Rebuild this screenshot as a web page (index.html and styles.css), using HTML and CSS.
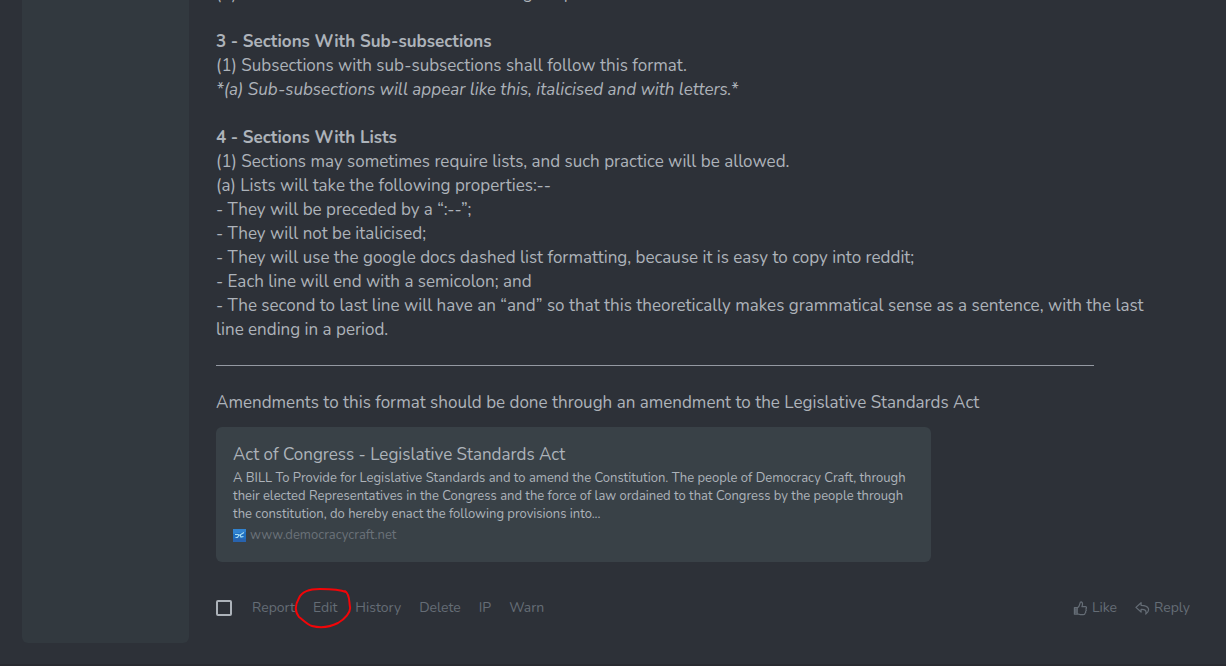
FILE: index.html
```html
<!DOCTYPE html>
<html lang="en">
<head>
<meta charset="utf-8">
<title>Legislative Format</title>
<link rel="stylesheet" href="styles.css">
</head>
<body>
<article class="post">
  <aside class="post-user"></aside>
  <div class="post-main">
    <div class="post-body">
      <p>(1) Subsections will be formatted in using simple</p>
      <section>
        <h2>3 - Sections With Sub-subsections</h2>
        <p>(1) Subsections with sub-subsections shall follow this format.</p>
        <p><em>*(a) Sub-subsections will appear like this, italicised and with letters.*</em></p>
      </section>
      <section>
        <h2>4 - Sections With Lists</h2>
        <p>(1) Sections may sometimes require lists, and such practice will be allowed.</p>
        <p>(a) Lists will take the following properties:--</p>
        <p>- They will be preceded by a “:--”;</p>
        <p>- They will not be italicised;</p>
        <p>- They will use the google docs dashed list formatting, because it is easy to copy into reddit;</p>
        <p>- Each line will end with a semicolon; and</p>
        <p>- The second to last line will have an “and” so that this theoretically makes grammatical sense as a sentence, with the last line ending in a period.</p>
      </section>
      <hr class="rule">
      <p>Amendments to this format should be done through an amendment to the Legislative Standards Act</p>
    </div>
    <div class="unfurl">
      <h3><a href="#">Act of Congress - Legislative Standards Act</a></h3>
      <p class="unfurl-text">A BILL To Provide for Legislative Standards and to amend the Constitution. The people of Democracy Craft, through their elected Representatives in the Congress and the force of law ordained to that Congress by the people through the constitution, do hereby enact the following provisions into...</p>
      <div class="unfurl-site">
        <svg class="favicon" viewBox="0 0 13 13" aria-hidden="true">
          <rect width="13" height="13" fill="#1f6fc0"/>
          <path d="M0 0h13v3L0 5z" fill="#3183d0"/>
          <path d="M0 10l5-1 8 1v3H0z" fill="#2863ae"/>
          <path d="M2 5.500h3l1 .5-1.500 2.500H2.500M11 3.500L7 6l1 2 2.500-.5M5 6l3 0" fill="none" stroke="#a5dcf3" stroke-width="1.200"/>
        </svg>
        <span>www.democracycraft.net</span>
      </div>
    </div>
    <footer class="actions">
      <div class="group">
        <input class="select-post" type="checkbox" aria-label="Select post">
        <a href="#">Report</a>
        <a class="edit" href="#">Edit<svg class="ring" viewBox="0 0 60 44" aria-hidden="true"><path d="M53 6C46 3 37 3 27 3C18 3 9 5 6 12C2 19 2 26 6 31C10 34 15 39 19 40C27 42 37 41 45 37C52 33 58 26 57 21C56 16 57 8 52 5" fill="none" stroke="#f20508" stroke-width="2" stroke-linecap="round" stroke-linejoin="round"/></svg></a>
        <a href="#">History</a>
        <a href="#">Delete</a>
        <a href="#">IP</a>
        <a href="#">Warn</a>
      </div>
      <div class="group">
        <a class="with-icon" href="#"><svg class="icon" viewBox="0 0 16 16" aria-hidden="true"><path d="M1.500 7h3v7h-3zM3 8v5M4.500 7.500C6.500 6.500 7 4.500 7.300 3C7.500 1.400 8 1 8.800 1C10.500 1.500 10.500 3.500 9.500 6H13C14.500 6 14.800 7.500 13.800 8.500C14.400 9.500 14.200 10.500 13.500 11C13.800 12 13.300 12.700 12.800 13C12.800 14.200 12 14.600 11 14.600H9C7 14.600 6 13.700 4.500 13.700"/></svg>Like</a>
        <a class="with-icon" href="#"><svg class="icon" viewBox="0 0 16 16" aria-hidden="true"><path d="M6.500 1.800L1 6.800L6.500 11.800V9C10.500 8.800 12.600 10 11.500 14C16 10.500 16 4.800 6.500 4.600Z"/></svg>Reply</a>
      </div>
    </footer>
  </div>
</article>
</body>
</html>
```
FILE: styles.css
```css
* { box-sizing: border-box; }
body {
  margin: 0;
  background: #2d3138;
  color: #adb3ba;
  font-family: Nunito, "Open Sans", sans-serif;
  font-size: 17px;
  line-height: 24px;
  overflow: hidden;
}
h2, h3, p { margin: 0; font-size: inherit; }
h3 { font-weight: 400; }
a { color: inherit; text-decoration: none; }
.post {
  display: flex;
  gap: 27px;
  padding: 0 34px 21px 22px;
  border-bottom: 2px solid #292b31;
}
.post-user {
  flex: 0 0 167px;
  background: #32393f;
  border-radius: 0 0 6px 6px;
}
.post-main { flex: 1; min-width: 0; }
.post-body { margin-top: -18px; }
.post-body p { padding-right: 24px; }
.post-body section { margin-top: 24px; }
.rule {
  width: 90%;
  height: 1px;
  margin: 23px 0 25px;
  border: 0;
  background: #9499a2;
}
.unfurl {
  max-width: 715px;
  margin-top: 12px;
  padding: 16px 17px 18px;
  background: #394147;
  border-radius: 6px;
}
.unfurl-text { font-size: 13px; line-height: 18px; margin-top: 2px; }
.unfurl-site {
  display: flex;
  align-items: center;
  gap: 4px;
  margin-top: 3px;
  color: #6b7279;
  font-size: 13px;
  line-height: 18px;
}
.favicon { width: 13px; height: 13px; }
.actions {
  display: flex;
  justify-content: space-between;
  margin-top: 34px;
  padding: 0 2px 23px 0;
  color: #656d76;
  font-size: 14px;
}
.group { display: flex; align-items: center; gap: 18px; }
.select-post {
  appearance: none;
  width: 16px;
  height: 16px;
  margin: 0 2px 0 0;
  border: 2px solid #adb3ba;
  border-radius: 2px;
}
.edit { position: relative; }
.ring {
  position: absolute;
  left: 42%;
  top: 50%;
  width: 60px;
  height: 44px;
  transform: translate(-50%, -50%);
  pointer-events: none;
}
.with-icon { display: flex; align-items: center; gap: 4px; }
.icon {
  width: 15px;
  height: 15px;
  fill: none;
  stroke: currentColor;
  stroke-width: 1.3;
  stroke-linejoin: round;
}
```
